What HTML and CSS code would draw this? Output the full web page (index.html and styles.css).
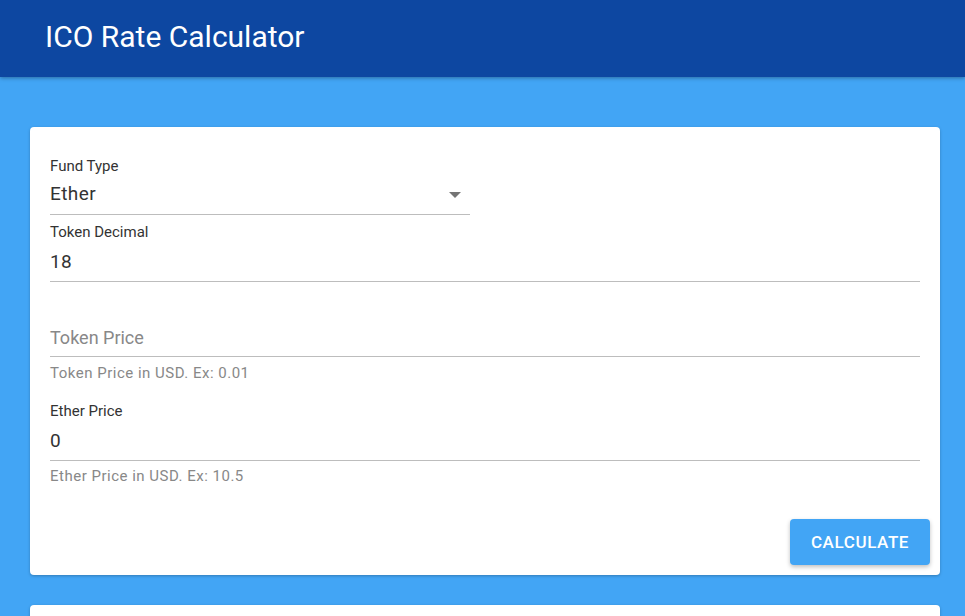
FILE: index.html
```html
<!DOCTYPE html>
<html>
<head>
<meta charset="utf-8">
<link rel="stylesheet" href="styles.css">
</head>
<body>
<header class="appbar">
  <h1 class="appbar-title">ICO Rate Calculator</h1>
</header>
<main class="content">
  <section class="card">
    <div class="field field-select">
      <div class="field-label">Fund Type</div>
      <div class="field-value select-value">
        <span>Ether</span>
        <svg class="select-arrow" width="12" height="6" viewBox="0 0 12 6"><path d="M0 0 L12 0 L6 6 Z" fill="#757575"/></svg>
      </div>
    </div>
    <div class="field field-decimal">
      <div class="field-label">Token Decimal</div>
      <div class="field-value">18</div>
    </div>
    <div class="field field-token">
      <div class="field-value placeholder">Token Price</div>
      <div class="field-helper">Token Price in USD. Ex: 0.01</div>
    </div>
    <div class="field field-ether">
      <div class="field-label">Ether Price</div>
      <div class="field-value">0</div>
      <div class="field-helper">Ether Price in USD. Ex: 10.5</div>
    </div>
    <div class="actions">
      <button class="btn">CALCULATE</button>
    </div>
  </section>
  <section class="card card-next"></section>
</main>
</body>
</html>
```

FILE: styles.css
```css
html, body {
  margin: 0;
  padding: 0;
}
body {
  background: #42a5f5;
  font-family: Roboto, "Noto Sans", sans-serif;
  overflow: hidden;
  height: 616px;
}
.appbar {
  background: #0d47a1;
  height: 77px;
  display: flex;
  align-items: center;
  padding-left: 45px;
  box-shadow: 0 1px 4px rgba(0,0,0,0.35);
  position: relative;
  z-index: 1;
}
.appbar-title {
  margin: 0;
  color: #fff;
  font-size: 30px;
  font-weight: 400;
  line-height: 1;
  padding-bottom: 4px;
}
.content {
  padding: 50px 25px 0 30px;
}
.card {
  background: #fff;
  border-radius: 4px;
  box-shadow: 0 1px 3px rgba(0,0,0,0.25);
  padding: 29px 10px 10px 20px;
}
.card-next {
  margin-top: 30px;
  height: 60px;
  padding: 0;
}
.field {
  margin-right: 10px;
}
.field-label {
  font-size: 15px;
  line-height: 20px;
  height: 20px;
  color: #333;
}
.field-value {
  font-size: 19px;
  letter-spacing: 0.4px;
  line-height: 28px;
  color: #333;
  border-bottom: 1px solid #bdbdbd;
}
.field-select {
  width: 420px;
}
.select-value {
  display: flex;
  align-items: center;
  justify-content: space-between;
  padding: 4px 0 6px;
}
.select-arrow {
  margin-right: 9px;
  margin-top: 2px;
}
.field-decimal {
  margin-top: 7px;
}
.field-decimal .field-value {
  padding: 6px 0 5px;
}
.field-token .field-value {
  padding: 42px 0 4px;
}
.placeholder {
  color: #888;
  font-size: 18px;
  letter-spacing: 0;
}
.field-helper {
  font-size: 15px;
  letter-spacing: 0.5px;
  line-height: 16px;
  color: #888;
  margin-top: 8px;
}
.field-ether {
  margin-top: 20px;
}
.field-ether .field-value {
  padding: 6px 0 5px;
}
.field-ether .field-helper {
  margin-top: 7px;
}
.actions {
  display: flex;
  justify-content: flex-end;
  margin-top: 35px;
}
.btn {
  background: #42a5f5;
  color: #fff;
  border: none;
  border-radius: 4px;
  width: 140px;
  height: 46px;
  font-family: Roboto, sans-serif;
  font-size: 17px;
  font-weight: 500;
  letter-spacing: 0.6px;
  box-shadow: 0 2px 4px rgba(0,0,0,0.25);
}
```
